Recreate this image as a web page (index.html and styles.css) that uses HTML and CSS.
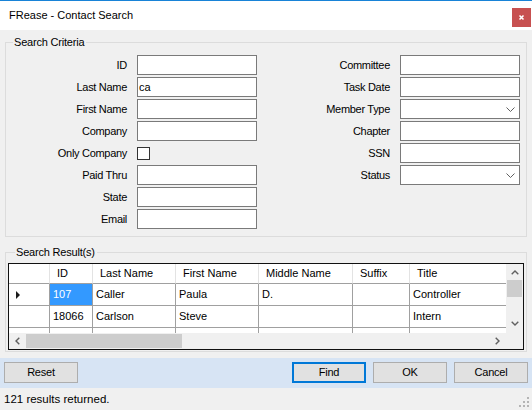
FILE: index.html
```html
<!DOCTYPE html>
<html>
<head>
<meta charset="utf-8">
<title>FRease - Contact Search</title>
<link rel="stylesheet" href="styles.css">
</head>
<body>
<div class="window">
  <div class="titlebar">
    <span class="title">FRease - Contact Search</span>
    <div class="close">
      <svg width="19" height="19" viewBox="0 0 19 19"><path d="M7.5 7.5 L11.5 11.5 M11.5 7.5 L7.5 11.5" stroke="#fff" stroke-width="1.6" fill="none"/></svg>
    </div>
  </div>

  <div class="content">
    <fieldset class="group criteria">
      <legend>Search Criteria</legend>
      <div class="cols">
        <div class="form form-left">
          <label>ID</label><div class="input"></div>
          <label>Last Name</label><div class="input">ca</div>
          <label>First Name</label><div class="input"></div>
          <label>Company</label><div class="input"></div>
          <label>Only Company</label><div class="checkwrap"><div class="check"></div></div>
          <label>Paid Thru</label><div class="input"></div>
          <label>State</label><div class="input"></div>
          <label>Email</label><div class="input"></div>
        </div>
        <div class="form form-right">
          <label>Committee</label><div class="input"></div>
          <label>Task Date</label><div class="input"></div>
          <label>Member Type</label><div class="input combo"><svg width="9" height="5" viewBox="0 0 9 5"><polyline points="0.5,0.5 4.5,4.5 8.5,0.5" fill="none" stroke="#606060" stroke-width="1"/></svg></div>
          <label>Chapter</label><div class="input"></div>
          <label>SSN</label><div class="input"></div>
          <label>Status</label><div class="input combo"><svg width="9" height="5" viewBox="0 0 9 5"><polyline points="0.5,0.5 4.5,4.5 8.5,0.5" fill="none" stroke="#606060" stroke-width="1"/></svg></div>
        </div>
      </div>
    </fieldset>

    <fieldset class="group results">
      <legend>Search Result(s)</legend>
      <div class="grid">
        <div class="grid-main">
          <div class="table">
            <div class="row hrow">
              <div class="cell c-rh"></div>
              <div class="cell c-id">ID</div>
              <div class="cell c-ln">Last Name</div>
              <div class="cell c-fn">First Name</div>
              <div class="cell c-mn">Middle Name</div>
              <div class="cell c-sx">Suffix</div>
              <div class="cell c-ti">Title</div>
            </div>
            <div class="row brow">
              <div class="cell c-rh"><svg width="4" height="8" viewBox="0 0 4 8"><polygon points="0,0 4,4 0,8" fill="#1a1a1a"/></svg></div>
              <div class="cell c-id sel">107</div>
              <div class="cell c-ln">Caller</div>
              <div class="cell c-fn">Paula</div>
              <div class="cell c-mn">D.</div>
              <div class="cell c-sx"></div>
              <div class="cell c-ti">Controller</div>
            </div>
            <div class="row brow">
              <div class="cell c-rh"></div>
              <div class="cell c-id">18066</div>
              <div class="cell c-ln">Carlson</div>
              <div class="cell c-fn">Steve</div>
              <div class="cell c-mn"></div>
              <div class="cell c-sx"></div>
              <div class="cell c-ti">Intern</div>
            </div>
            <div class="row brow">
              <div class="cell c-rh"></div>
              <div class="cell c-id"></div>
              <div class="cell c-ln"></div>
              <div class="cell c-fn"></div>
              <div class="cell c-mn"></div>
              <div class="cell c-sx"></div>
              <div class="cell c-ti"></div>
            </div>
          </div>
          <div class="vscroll">
            <div class="sbtn up"><svg width="8" height="5" viewBox="0 0 8 5"><polyline points="0.7,4.3 4,1 7.3,4.3" fill="none" stroke="#606060" stroke-width="1.4"/></svg></div>
            <div class="vthumb"></div>
            <div class="sfill"></div>
            <div class="sbtn down"><svg width="8" height="5" viewBox="0 0 8 5"><polyline points="0.7,0.7 4,4 7.3,0.7" fill="none" stroke="#606060" stroke-width="1.4"/></svg></div>
          </div>
        </div>
        <div class="hscroll">
          <div class="hbtn"><svg width="5" height="8" viewBox="0 0 5 8"><polyline points="4.3,0.7 1,4 4.3,7.3" fill="none" stroke="#606060" stroke-width="1.4"/></svg></div>
          <div class="hthumb"></div>
          <div class="sfill"></div>
          <div class="hbtn"><svg width="5" height="8" viewBox="0 0 5 8"><polyline points="0.7,0.7 4,4 0.7,7.3" fill="none" stroke="#606060" stroke-width="1.4"/></svg></div>
          <div class="corner"></div>
        </div>
      </div>
    </fieldset>
  </div>

  <div class="buttonbar">
    <div class="btn">Reset</div>
    <div class="spacer"></div>
    <div class="btn default">Find</div>
    <div class="btn">OK</div>
    <div class="btn">Cancel</div>
  </div>

  <div class="statusbar">
    <span class="status">121 results returned.</span>
    <svg class="grip" width="12" height="12" viewBox="0 0 12 12">
      <rect x="9" y="1" width="2" height="2" fill="#b4b4b4"/>
      <rect x="5" y="5" width="2" height="2" fill="#b4b4b4"/>
      <rect x="9" y="5" width="2" height="2" fill="#b4b4b4"/>
      <rect x="1" y="9" width="2" height="2" fill="#b4b4b4"/>
      <rect x="5" y="9" width="2" height="2" fill="#b4b4b4"/>
      <rect x="9" y="9" width="2" height="2" fill="#b4b4b4"/>
    </svg>
  </div>
</div>
</body>
</html>
```

FILE: styles.css
```css
* { box-sizing: border-box; }

html, body {
  margin: 0;
  padding: 0;
}

body {
  width: 532px;
  height: 410px;
  overflow: hidden;
  background: #f0f0f0;
  font-family: "Liberation Sans", Arial, sans-serif;
  font-size: 11px;
  color: #000;
}

.window {
  width: 532px;
  height: 410px;
  display: flex;
  flex-direction: column;
}

/* Title bar */
.titlebar {
  height: 30px;
  flex: none;
  background: #fff;
  border-top: 1px solid #1883d7;
  display: flex;
  align-items: flex-start;
}

.title {
  margin-left: 9px;
  line-height: 29px;
  font-size: 11px;
  color: #000;
}

.close {
  margin-left: auto;
  margin-top: 7px;
  margin-right: 1px;
  width: 19px;
  height: 19px;
  background: #c75050;
  display: flex;
}

/* Content */
.content {
  flex: 1;
  padding: 0 5px;
}

.group {
  margin: 0;
  padding: 0;
  border: 1px solid #dcdcdc;
  min-width: 0;
}

.group legend {
  margin-left: 7px;
  padding: 0 2px 0 1px;
  line-height: 13px;
  font-size: 11px;
  letter-spacing: -0.2px;
}

.criteria {
  margin-top: 6px;
  padding: 6px 0 7px 0;
}

.cols {
  display: flex;
}

.form {
  display: grid;
  grid-auto-rows: 20px;
  row-gap: 2px;
  column-gap: 10px;
  align-content: start;
}

.form-left { grid-template-columns: 121px 120px; }
.form-right { grid-template-columns: 133px 120px; }

.form label {
  text-align: right;
  line-height: 20px;
  white-space: nowrap;
  letter-spacing: -0.3px;
}

.input {
  width: 120px;
  height: 20px;
  background: #fff;
  border: 1px solid #7a7a7a;
  padding-left: 1px;
  line-height: 18px;
}

.combo {
  display: flex;
  align-items: center;
  justify-content: flex-end;
  padding-right: 4px;
}

.checkwrap {
  display: flex;
  align-items: center;
}

.check {
  width: 13px;
  height: 13px;
  background: #fff;
  border: 1px solid #333;
}

/* Results */
.results {
  margin-top: 9px;
  padding: 4px 2px 1px 2px;
}

.grid {
  width: 516px;
  height: 87px;
  border: 1px solid #101010;
  background: #fff;
  display: flex;
  flex-direction: column;
}

.grid-main {
  display: flex;
  height: 69px;
  flex: none;
}

.table {
  width: 497px;
  height: 69px;
  overflow: hidden;
}

.row {
  display: flex;
}

.cell {
  flex: none;
  white-space: nowrap;
  overflow: hidden;
}

.hrow .cell {
  height: 20px;
  line-height: 19px;
  padding-left: 7px;
  border-right: 1px solid #e3e3e3;
  border-bottom: 1px solid #a0a0a0;
}

.brow .cell {
  height: 22px;
  line-height: 21px;
  padding-left: 3px;
  border-right: 1px solid #a0a0a0;
  border-bottom: 1px solid #a0a0a0;
}

.brow .c-rh {
  padding-left: 7px;
  display: flex;
  align-items: center;
}

.cell.c-ti { border-right: none; }

.c-rh { width: 41px; }
.c-id { width: 43px; }
.c-ln { width: 83px; }
.c-fn { width: 83px; }
.c-mn { width: 94px; }
.c-sx { width: 57px; }
.c-ti { width: 96px; }

.brow .sel {
  background: #3399ff;
  color: #fff;
}

.vscroll {
  width: 17px;
  height: 69px;
  background: #f0f0f0;
  display: flex;
  flex-direction: column;
}

.sbtn {
  height: 16px;
  flex: none;
  display: flex;
  align-items: center;
  justify-content: center;
}

.sbtn.down { padding-bottom: 3px; }

.vthumb {
  height: 17px;
  flex: none;
  margin: 0 1px;
  background: #cdcdcd;
}

.sfill { flex: 1; }

.hscroll {
  height: 16px;
  flex: none;
  background: #f0f0f0;
  display: flex;
}

.hbtn {
  width: 17px;
  flex: none;
  display: flex;
  align-items: center;
  justify-content: center;
}

.hthumb {
  width: 156px;
  flex: none;
  margin: 1px 0;
  background: #cdcdcd;
}

.corner {
  width: 17px;
  flex: none;
  background: #f0f0f0;
}

/* Button bar */
.buttonbar {
  height: 30px;
  flex: none;
  background: #d7e4f4;
  display: flex;
  align-items: flex-start;
  padding: 4px 4px 0 4px;
  gap: 7px;
}

.spacer { flex: 1; }

.btn {
  width: 74px;
  height: 21px;
  border: 1px solid #adadad;
  background: #e1e1e1;
  text-align: center;
  line-height: 19px;
  letter-spacing: -0.2px;
}

.btn.default {
  border: 2px solid #0078d7;
  line-height: 17px;
}

/* Status bar */
.statusbar {
  height: 22px;
  flex: none;
  background: #f0f0f0;
  display: flex;
  align-items: flex-start;
}

.status {
  padding-left: 4px;
  line-height: 22px;
  font-size: 11.5px;
}

.grip {
  margin-left: auto;
  margin-top: 8px;
  margin-right: 2px;
}
```
